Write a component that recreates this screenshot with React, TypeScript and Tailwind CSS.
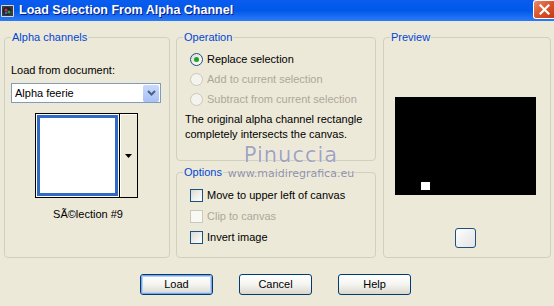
import React from "react";

const font = { fontFamily: '"Liberation Sans", Arial, sans-serif' };

function Group({
  label,
  className,
  children,
}: {
  label: string;
  className: string;
  children?: React.ReactNode;
}) {
  return (
    <div className={`relative rounded-[4px] border border-[#D0D0BF] ${className}`}>
      <span className="absolute left-[6px] top-[-8px] bg-[#ECE9D8] px-[1px] text-[11px] leading-[14px] text-[#0046D5]">
        {label}
      </span>
      {children}
    </div>
  );
}

function Radio({ checked, disabled, label }: { checked?: boolean; disabled?: boolean; label: string }) {
  return (
    <div className="flex h-[13px] items-center gap-[4px]">
      <div
        className={`flex h-[13px] w-[13px] items-center justify-center rounded-full border ${
          disabled ? "border-[#CAC8BB] bg-[#F4F3EE]" : "border-[#1C5180] bg-gradient-to-br from-[#DCDCD5] to-white"
        }`}
      >
        {checked && <div className="h-[5px] w-[5px] rounded-full bg-[#21A121]" />}
      </div>
      <span className={`text-[11px] leading-[13px] ${disabled ? "text-[#ACA899]" : "text-black"}`}>{label}</span>
    </div>
  );
}

function Check({ disabled, label }: { disabled?: boolean; label: string }) {
  return (
    <div className="flex h-[13px] items-center gap-[4px]">
      <div
        className={`h-[13px] w-[13px] border ${
          disabled ? "border-[#CAC8BB] bg-[#F8F8F4]" : "border-[#1C5180] bg-gradient-to-br from-[#DCDCD5] to-white"
        }`}
      />
      <span className={`text-[11px] leading-[13px] ${disabled ? "text-[#ACA899]" : "text-black"}`}>{label}</span>
    </div>
  );
}

function XPButton({ label, def }: { label: string; def?: boolean }) {
  return (
    <div className="flex h-[21px] w-[73px] items-center justify-center rounded-[3px] border border-[#003C74] bg-gradient-to-b from-white via-[#F4F4F0] to-[#DCD7CB]">
      <div
        className={`flex h-full w-full items-center justify-center rounded-[2px] ${
          def ? "border border-[#79A6E8] shadow-[inset_0_0_0_1px_#B8D1F6]" : ""
        }`}
      >
        <span className="text-[11px] leading-[13px] text-black">{label}</span>
      </div>
    </div>
  );
}

export default function App() {
  return (
    <div className="relative flex h-[306px] w-[554px] flex-col overflow-hidden bg-[#ECE9D8]" style={font}>
      {/* Title bar */}
      <div className="flex h-[21px] items-start bg-gradient-to-b from-[#0A5CF0] via-[#0058E8] to-[#2A7BFA]">
        <div className="flex h-[20px] flex-1 items-center">
          <svg width="14" height="14" viewBox="0 0 14 14" className="ml-[1px] mt-[1px]">
            <rect x="0" y="1" width="13" height="12" rx="1" fill="#D8D8D8" />
            <rect x="1" y="2" width="11" height="10" fill="#3A3A3A" />
            <circle cx="6" cy="7" r="4" fill="#202020" />
            <circle cx="5" cy="6" r="1.6" fill="#C03050" />
            <circle cx="8" cy="8" r="1.6" fill="#2E9E4A" />
            <circle cx="5" cy="9" r="1.3" fill="#3A6AD0" />
          </svg>
          <span
            className="ml-[4px] text-[12.5px] font-bold leading-[20px] text-white"
            style={{ textShadow: "1px 1px 0 #0A1883" }}
          >
            Load Selection From Alpha Channel
          </span>
        </div>
        <div className="flex h-[19px] w-[21px] items-center justify-center rounded-bl-[3px] rounded-tl-[3px] border border-r-0 border-white bg-gradient-to-br from-[#E88A6A] via-[#D9532B] to-[#C23B14]">
          <svg width="11" height="11" viewBox="0 0 11 11">
            <path d="M1.5 1.5 L9.5 9.5 M9.5 1.5 L1.5 9.5" stroke="white" strokeWidth="2.2" strokeLinecap="square" />
          </svg>
        </div>
      </div>

      {/* Body */}
      <div className="flex pl-[4px] pt-[16px]">
        {/* Alpha channels */}
        <Group label="Alpha channels" className="flex h-[221px] w-[166px] flex-col px-[6px] pt-[26px]">
          <span className="text-[11px] leading-[13px] text-black">Load from document:</span>
          <div className="mt-[6px] flex h-[20px] w-[150px] items-center border border-[#7F9DB9] bg-white">
            <span className="flex-1 pl-[3px] text-[11px] leading-[13px] text-black">Alpha feerie</span>
            <div className="mr-[1px] flex h-[17px] w-[16px] items-center justify-center rounded-[2px] bg-gradient-to-b from-[#C9DAFC] to-[#A8C0F5]">
              <svg width="9" height="6" viewBox="0 0 9 6">
                <path d="M1 1 L4.5 4.5 L8 1" stroke="#4D6185" strokeWidth="2" fill="none" />
              </svg>
            </div>
          </div>
          <div className="ml-[24px] mt-[10px] flex">
            <div className="h-[85px] w-[85px] border border-black bg-white p-[1px]">
              <div className="h-full w-full border-[3px] border-[#316AC5] bg-white" />
            </div>
            <div className="flex h-[85px] w-[18px] items-center justify-center border-y border-r border-black bg-[#ECE9D8] shadow-[inset_1px_1px_0_white]">
              <svg width="7" height="4" viewBox="0 0 7 4">
                <path d="M0 0 H7 L3.5 4 Z" fill="black" />
              </svg>
            </div>
          </div>
          <div className="mt-[10px] w-[166px] -ml-[6px] text-center text-[11px] leading-[13px] text-black">
            SÃ©lection #9
          </div>
        </Group>

        {/* Middle column */}
        <div className="ml-[6px] flex w-[200px] flex-col">
          <Group label="Operation" className="h-[124px] pl-[13px] pt-[15px]">
            <div className="flex flex-col gap-[7px]">
              <Radio checked label="Replace selection" />
              <Radio disabled label="Add to current selection" />
              <Radio disabled label="Subtract from current selection" />
            </div>
            <div className="-ml-[5px] mt-[6px] text-[11px] leading-[15px] text-black">
              The original alpha channel rectangle
              <br />
              completely intersects the canvas.
            </div>
          </Group>
          <Group label="Options" className="mt-[11px] h-[86px] pl-[13px] pt-[16px]">
            <div className="flex flex-col gap-[8px]">
              <Check label="Move to upper left of canvas" />
              <Check disabled label="Clip to canvas" />
              <Check label="Invert image" />
            </div>
          </Group>
        </div>

        {/* Preview */}
        <Group label="Preview" className="ml-[7px] flex h-[221px] w-[168px] flex-col items-start pl-[11px] pt[59px] pt-[59px]">
          <div className="relative h-[98px] w-[141px] bg-black">
            <div className="absolute left-[26px] top-[85px] h-[8px] w-[9px] bg-white" />
          </div>
          <div className="ml-[60px] mt-[33px] h-[20px] w-[21px] rounded-[3px] border border-[#1C5180] bg-gradient-to-br from-white via-[#F0F0F0] to-[#E4E4E4]" />
        </Group>
      </div>

      {/* Buttons */}
      <div className="mt-[16px] flex gap-[26px] pl-[140px]">
        <XPButton label="Load" def />
        <XPButton label="Cancel" />
        <XPButton label="Help" />
      </div>

      {/* Watermark */}
      <div className="pointer-events-none absolute left-[226px] top-[145px] flex w-[130px] flex-col items-center">
        <span
          className="text-[21px] leading-[21px] tracking-[1px] text-[#A3A3BC]"
          style={{ fontFamily: '"DejaVu Sans", sans-serif', textShadow: "0 0 1px #fff, 0 0 1px #fff" }}
        >
          Pinuccia
        </span>
        <span
          className="mt-[2px] text-[11px] leading-[12px] text-[#8E8EA3]"
          style={{ fontFamily: '"DejaVu Sans", sans-serif', textShadow: "0 0 1px #fff" }}
        >
          www.maidiregrafica.eu
        </span>
      </div>
    </div>
  );
}
